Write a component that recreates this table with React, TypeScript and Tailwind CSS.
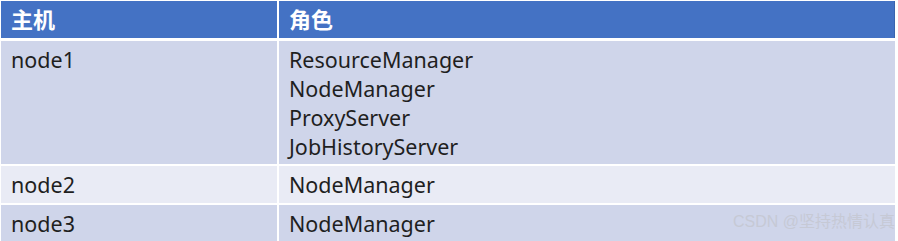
import React from "react";

const rows = [
  { host: "node1", roles: ["ResourceManager", "NodeManager", "ProxyServer", "JobHistoryServer"], bg: "bg-[#cfd5ea]", h: "h-[123px]" },
  { host: "node2", roles: ["NodeManager"], bg: "bg-[#e9ebf5]", h: "h-[37px]" },
  { host: "node3", roles: ["NodeManager"], bg: "bg-[#cfd5ea]", h: "h-[37px]" },
];

const App = () => {
  return (
    <div className="relative w-[898px] h-[241px] overflow-hidden bg-white pl-px pt-px font-['Noto_Sans','Noto_Sans_CJK_SC',sans-serif]">
      <div className="w-[894px] flex flex-col">
        <div className="flex h-[37px] bg-[#4472c4] text-white text-[22px] font-bold">
          <div className="w-[276px] pl-[10px] leading-[37px]">主机</div>
          <div className="w-[2px] bg-white" />
          <div className="flex-1 pl-[10px] leading-[37px] border-r border-[#3a64ae]">角色</div>
        </div>
        {rows.map((r, i) => (
          <div key={r.host} className={`flex ${r.h} ${r.bg} text-[#1f1f1f] text-[21.5px] ${i === 0 ? "mt-[3px]" : "mt-[2px]"}`}>
            <div className="w-[276px] pl-[10px] pt-[4px] leading-[29px]">{r.host}</div>
            <div className="w-[2px] bg-white" />
            <div className="flex-1 pl-[10px] pt-[4px] leading-[29px]">
              {r.roles.map((role) => (
                <div key={role}>{role}</div>
              ))}
            </div>
          </div>
        ))}
      </div>
      <div className="absolute right-[3px] bottom-[7px] text-[16px] text-[#c6c9d5] font-['Liberation_Sans','Noto_Sans_CJK_SC',sans-serif]">
        CSDN @坚持热情认真
      </div>
    </div>
  );
};

export default App;
